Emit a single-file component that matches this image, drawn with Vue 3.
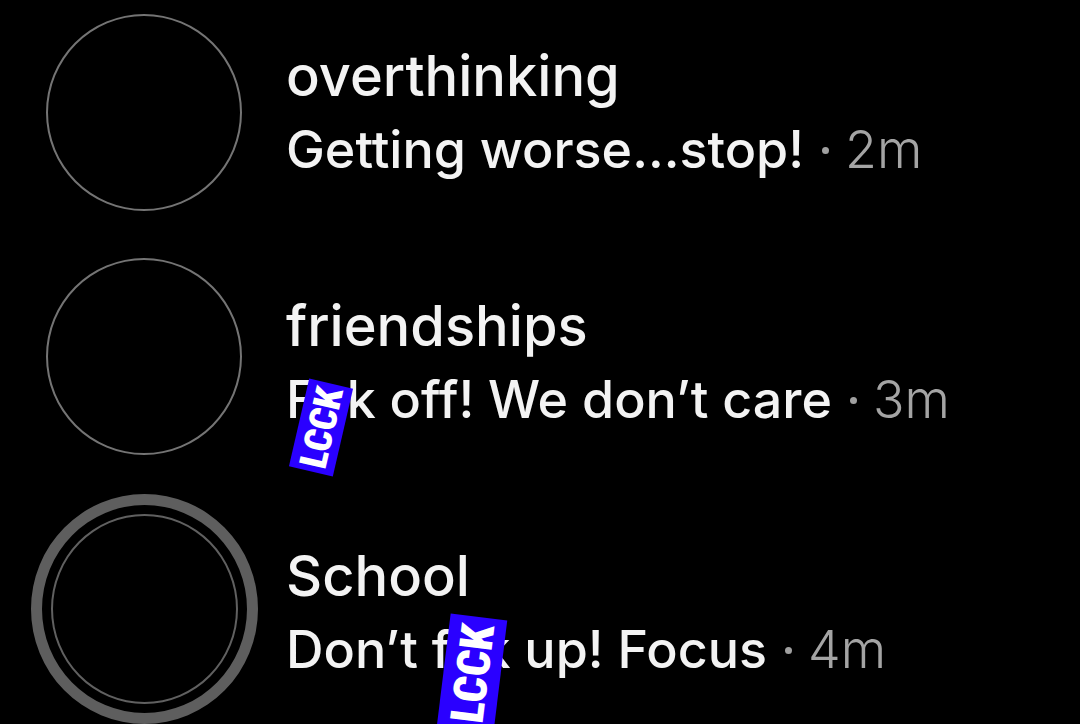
<script setup>
const chats = [
  { name: 'overthinking', before: 'Getting worse...stop!', time: '2m' },
  { name: 'friendships', before: 'F', sticker: 'small', after: 'k off! We don’t care', time: '3m' },
  { name: 'School', before: 'Don’t f', sticker: 'large', after: 'k up! Focus', time: '4m', story: true },
]
</script>

<template>
  <main class="inbox">
    <ul class="list">
      <li v-for="chat in chats" :key="chat.name" class="row">
        <div class="avatar-cell">
          <div class="avatar" :class="{ story: chat.story }"><div class="face"></div></div>
        </div>
        <div class="body">
          <h2 class="name">{{ chat.name }}</h2>
          <p class="preview">
            <span class="message">{{ chat.before }}<span v-if="chat.sticker" class="gap"><span class="sticker" :class="chat.sticker">LCCK</span></span>{{ chat.after }}</span>
            <span class="dot"></span>
            <time class="time">{{ chat.time }}</time>
          </p>
        </div>
      </li>
    </ul>
  </main>
</template>

<style>
body {
  margin: 0;
  background: #000;
}
</style>

<style scoped>
.inbox {
  height: 100vh;
  overflow: hidden;
  background: #000;
  color: #f3f3f3;
  font-family: Inter, "Noto Sans", sans-serif;
  font-variant-ligatures: none;
}
.list {
  list-style: none;
  margin: 0;
  padding: 0;
}
.row {
  display: flex;
  align-items: flex-start;
  gap: 28px;
  height: 250px;
  padding-left: 30px;
}
.avatar-cell {
  flex: none;
  display: flex;
  justify-content: center;
  width: 228px;
  padding-top: 14px;
}
.row:nth-child(2) .avatar-cell {
  padding-top: 8px;
}
.row:nth-child(3) .avatar-cell {
  padding-top: 0;
  margin-top: -6px;
}
.avatar {
  box-sizing: border-box;
  width: 196px;
  height: 197px;
}
.face {
  box-sizing: border-box;
  width: 100%;
  height: 100%;
  border: 2px solid #747474;
  border-radius: 50%;
}
.story {
  width: 227px;
  height: 230px;
  padding: 9px;
  border: 11px solid #5e5e5e;
  border-radius: 50%;
}
.story .face {
  border-color: #606060;
}
.body {
  padding-top: 38px;
  white-space: nowrap;
}
.name {
  margin: 0;
  font-size: 56px;
  line-height: 76px;
  font-weight: 500;
}
.preview {
  display: flex;
  align-items: center;
  margin: 0;
  font-size: 52px;
  line-height: 72px;
  font-weight: 500;
}
.gap {
  position: relative;
  display: inline-block;
  width: 30px;
  height: 38px;
}
.dot {
  width: 7px;
  height: 7px;
  margin: 0 16px 0 18px;
  border-radius: 50%;
  background: #a0a0a0;
}
.time {
  color: #a4a4a4;
  font-weight: 300;
}
.sticker {
  position: absolute;
  z-index: 1;
  display: flex;
  align-items: center;
  justify-content: center;
  background: #2a00ff;
  color: #fff;
  font-family: "Roboto Condensed", Roboto, sans-serif;
  font-weight: 900;
  line-height: 1;
}
.small {
  left: -41px;
  top: 25px;
  width: 90px;
  height: 45px;
  font-size: 38px;
  transform: rotate(-77deg);
}
.large {
  left: -36px;
  top: 15px;
  width: 114px;
  height: 57px;
  font-size: 46px;
  transform: rotate(-83deg);
}
</style>
